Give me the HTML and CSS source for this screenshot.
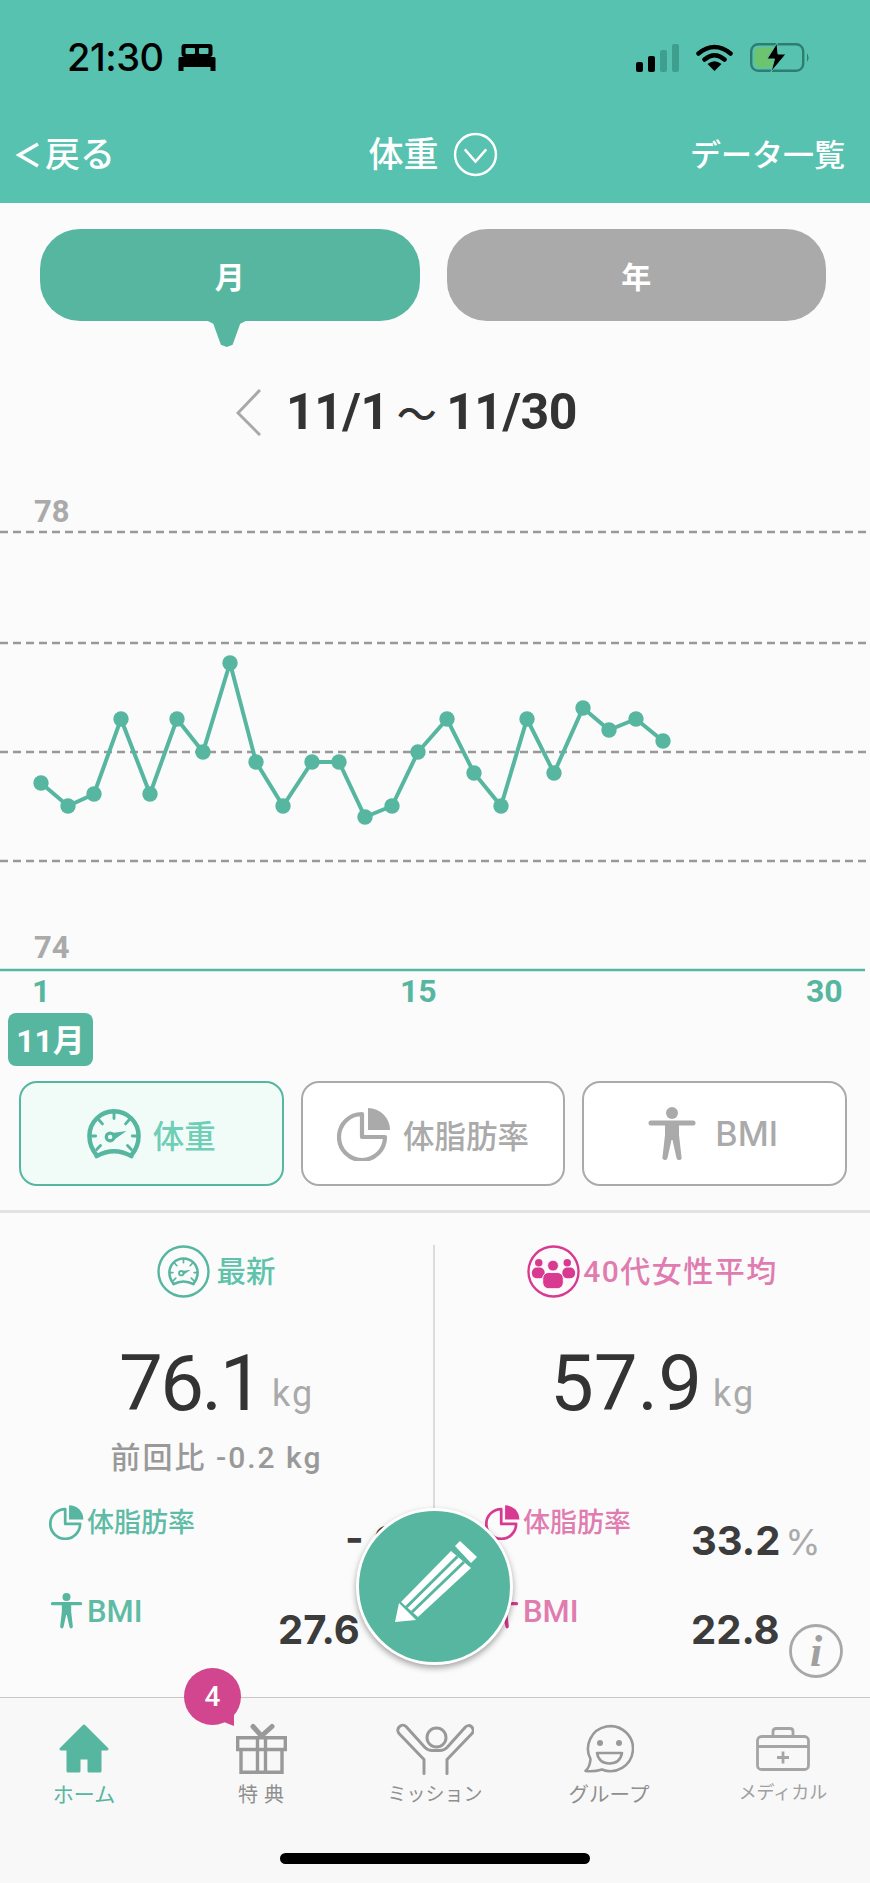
FILE: index.html
```html
<!DOCTYPE html>
<html lang="ja">
  <head>
    <meta charset="UTF-8" />
    <meta name="viewport" content="width=device-width, initial-scale=1.0" />
    <title>体重</title>
    <link rel="stylesheet" href="styles.css">
  </head>
  <body>
    <svg class="defs" width="0" height="0">
      <symbol id="i-gauge" viewBox="0 0 56 52">
        <g fill="none" stroke="currentColor" stroke-width="4.6" stroke-linecap="round">
          <path d="M10 48C5 42 2.5 35 2.5 28A25.5 25.5 0 0 1 53.500 28C53.500 35 51 42 46 48" />
          <path d="M10 49Q28 39 46 49" />
          <path d="M28 4V10M12 11L16 15.500M44 11L40 15.500M4 28H9M47 28H52M10 42L14 38M46 42L42 38" stroke-width="3" />
          <circle cx="24" cy="29" r="4" stroke-width="3.400" />
        </g>
        <path d="M26 25L41 23L28 32Z" fill="currentColor" />
      </symbol>
      <symbol id="i-pie" viewBox="0 0 54 54">
        <path d="M25 7A23 23 0 1 0 48 30H25Z" fill="none" stroke="currentColor" stroke-width="4.200" stroke-linejoin="round" />
        <path d="M31 1A22 22 0 0 1 53 23H31Z" fill="currentColor" />
      </symbol>
      <symbol id="i-person" viewBox="0 0 48 54">
        <circle cx="24" cy="6" r="6" fill="currentColor" />
        <path d="M3 16H45" stroke="currentColor" stroke-width="5" stroke-linecap="round" />
        <path d="M17 16H31V28L33.500 50A2.500 2.500 0 0 1 28.500 51L24.500 33H23.500L19.500 51A2.500 2.500 0 0 1 14.500 50L17 28Z" fill="currentColor" />
      </symbol>
    </svg>

    <div class="phone">
      <header class="top">
        <div class="status">
          <div class="status-left">
            <span class="clock">21:30</span>
            <svg class="bed" viewBox="0 0 37 27">
              <rect x="3" y="0" width="31" height="13" rx="3" fill="#000" />
              <rect x="7" y="4" width="9.500" height="6" rx="1" fill="#58c2b0" />
              <rect x="20.500" y="4" width="9.500" height="6" rx="1" fill="#58c2b0" />
              <rect x="0" y="13" width="37" height="10" rx="1.500" fill="#000" />
              <rect x="0" y="22" width="5" height="5" fill="#000" />
              <rect x="32" y="22" width="5" height="5" fill="#000" />
            </svg>
          </div>
          <div class="status-right">
            <svg class="signal" viewBox="0 0 44 28">
              <rect x="0" y="18" width="7" height="10" rx="2" fill="#000" />
              <rect x="12" y="12" width="7" height="16" rx="2" fill="#000" />
              <rect x="24" y="6" width="7" height="22" rx="2" fill="#3f9f8f" />
              <rect x="36" y="0" width="7" height="28" rx="2" fill="#3f9f8f" />
            </svg>
            <svg class="wifi" viewBox="0 0 36 27">
              <path d="M2 9.500Q18 -3.500 34 9.500M8 15.500Q18 7 28 15.500" fill="none" stroke="#000" stroke-width="4.500" stroke-linecap="round" />
              <path d="M11 20Q18 14.500 25 20L18 27Z" fill="#000" />
            </svg>
            <svg class="battery" viewBox="0 0 60 29">
              <rect x="1.200" y="1.200" width="52" height="26.600" rx="7" fill="none" stroke="#2f7d70" stroke-width="2.400" />
              <path d="M10 4.500H24V24.500H10A5 5 0 0 1 4.500 19.500V9.500A5 5 0 0 1 10 4.500Z" fill="#6cc46e" />
              <path d="M57 10Q60 14.500 57 19Z" fill="#2f7d70" />
              <path d="M27 0L17 16H24.500L21 29L36 11H28Z" fill="#000" stroke="#58c2b0" stroke-width="1" />
            </svg>
          </div>
        </div>
        <nav class="nav">
          <a class="nav-back">
            <svg class="nav-chevron" viewBox="0 0 26 28"><path d="M23 3L4 14L23 25" fill="none" stroke="#fff" stroke-width="3.500" /></svg>
            <span>戻る</span>
          </a>
          <div class="nav-title">
            <span>体重</span>
            <svg class="nav-down" viewBox="0 0 43 44">
              <circle cx="21.500" cy="22" r="20" fill="none" stroke="#fff" stroke-width="2.400" />
              <path d="M11 17L21.500 29L32 17" fill="none" stroke="#fff" stroke-width="2.400" />
            </svg>
          </div>
          <a class="nav-list">データ一覧</a>
        </nav>
      </header>

      <main class="content">
        <div class="segments">
          <div class="seg seg--on">月</div>
          <div class="seg">年</div>
        </div>

        <div class="range">
          <svg class="range-prev" viewBox="0 0 25 47"><path d="M24 1L2 24L24 46" fill="none" stroke="#a8a8a8" stroke-width="3" /></svg>
          <span>11/1<span class="range-tilde">〜</span>11/30</span>
        </div>

        <svg class="chart" viewBox="0 0 870 520" width="870" height="520">
          <g class="chart-grid">
            <line x1="0" y1="42" x2="866" y2="42" />
            <line x1="0" y1="153" x2="866" y2="153" />
            <line x1="0" y1="262" x2="866" y2="262" />
            <line x1="0" y1="371" x2="866" y2="371" />
          </g>
          <text class="chart-y" x="34" y="32">78</text>
          <text class="chart-y" x="34" y="468">74</text>
          <line class="chart-base" x1="0" y1="480" x2="865" y2="480" />
          <polyline class="chart-line" points="41,293 68,316 94,304 121,229 150,304 177,229 203,262 230,173 256,272 283,316 312,272 339,272 365,327 392,316 418,262 447,229 474,283 501,316 527,229 554,283 583,218 609,240 636,229 663,251" />
          <g class="chart-dots">
            <circle cx="41" cy="293" r="7.700" /><circle cx="68" cy="316" r="7.700" /><circle cx="94" cy="304" r="7.700" />
            <circle cx="121" cy="229" r="7.700" /><circle cx="150" cy="304" r="7.700" /><circle cx="177" cy="229" r="7.700" />
            <circle cx="203" cy="262" r="7.700" /><circle cx="230" cy="173" r="7.700" /><circle cx="256" cy="272" r="7.700" />
            <circle cx="283" cy="316" r="7.700" /><circle cx="312" cy="272" r="7.700" /><circle cx="339" cy="272" r="7.700" />
            <circle cx="365" cy="327" r="7.700" /><circle cx="392" cy="316" r="7.700" /><circle cx="418" cy="262" r="7.700" />
            <circle cx="447" cy="229" r="7.700" /><circle cx="474" cy="283" r="7.700" /><circle cx="501" cy="316" r="7.700" />
            <circle cx="527" cy="229" r="7.700" /><circle cx="554" cy="283" r="7.700" /><circle cx="583" cy="218" r="7.700" />
            <circle cx="609" cy="240" r="7.700" /><circle cx="636" cy="229" r="7.700" /><circle cx="663" cy="251" r="7.700" />
          </g>
          <text class="chart-x" x="32" y="512">1</text>
          <text class="chart-x" x="400" y="512">15</text>
          <text class="chart-x" x="806" y="512">30</text>
        </svg>

        <div class="month-tag">11月</div>

        <div class="metrics">
          <div class="metric metric--on">
            <svg class="metric-icon"><use href="#i-gauge" /></svg>
            <span>体重</span>
          </div>
          <div class="metric">
            <svg class="metric-icon"><use href="#i-pie" /></svg>
            <span>体脂肪率</span>
          </div>
          <div class="metric">
            <svg class="metric-icon"><use href="#i-person" /></svg>
            <span class="metric-latin">BMI</span>
          </div>
        </div>

        <div class="rule"></div>

        <section class="stats">
          <div class="stat-col stat-col--mine">
            <div class="stat-head">
              <span class="head-badge">
                <svg viewBox="0 0 53 53">
                  <circle cx="26.500" cy="26.500" r="25" fill="none" stroke="currentColor" stroke-width="2.400" />
                  <use href="#i-gauge" x="11" y="12" width="31" height="29" />
                </svg>
              </span>
              <span class="head-text">最新</span>
            </div>
            <div class="stat-main"><b>76.1</b><small>kg</small></div>
            <div class="stat-delta">前回比 -0.2 kg</div>
            <div class="stat-row">
              <div class="stat-label"><svg><use href="#i-pie" /></svg>体脂肪率</div>
              <div class="stat-num stat-num--diff">- 0.3<small>%</small></div>
            </div>
            <div class="stat-row">
              <div class="stat-label"><svg><use href="#i-person" /></svg><span class="stat-latin">BMI</span></div>
              <div class="stat-num">27.6</div>
            </div>
          </div>

          <div class="stats-rule"></div>

          <div class="stat-col stat-col--avg">
            <div class="stat-head">
              <span class="head-badge">
                <svg viewBox="0 0 54 54">
                  <circle cx="27" cy="27" r="25.500" fill="none" stroke="currentColor" stroke-width="2.400" />
                  <circle cx="12" cy="18" r="3.800" fill="currentColor" />
                  <circle cx="41" cy="18" r="3.800" fill="currentColor" />
                  <rect x="5" y="23" width="13" height="11" rx="5" fill="currentColor" />
                  <rect x="36" y="23" width="13" height="11" rx="5" fill="currentColor" />
                  <circle cx="26.500" cy="21" r="5.500" fill="currentColor" stroke="#fbfbfb" stroke-width="0.800" />
                  <rect x="16" y="28" width="21" height="16.500" rx="6" fill="currentColor" stroke="#fbfbfb" stroke-width="1" />
                </svg>
              </span>
              <span class="head-text">40代女性平均</span>
            </div>
            <div class="stat-main"><b>57.9</b><small>kg</small></div>
            <div class="stat-delta"></div>
            <div class="stat-row">
              <div class="stat-label"><svg><use href="#i-pie" /></svg>体脂肪率</div>
              <div class="stat-num">33.2<small>%</small></div>
            </div>
            <div class="stat-row">
              <div class="stat-label"><svg><use href="#i-person" /></svg><span class="stat-latin">BMI</span></div>
              <div class="stat-num">22.8</div>
            </div>
          </div>
        </section>
      </main>

      <svg class="info" viewBox="0 0 54 54">
        <circle cx="27" cy="27" r="25.500" fill="#fbfbfb" stroke="#a8a8a8" stroke-width="2.800" />
        <text x="27" y="42" text-anchor="middle">i</text>
      </svg>

      <button class="fab" type="button">
        <svg viewBox="0 0 151 151">
          <path d="M96 35L101 30L118 46L112 52Z" fill="#fff" />
          <path d="M92 40L112 57L59 106L42 91Z" fill="#fff" />
          <path d="M98.500 45.500L47.500 96M105 51L53 101" stroke="#56b6a0" stroke-width="3" fill="none" />
          <path d="M40 92L57 109L36 111Z" fill="#fff" />
        </svg>
      </button>

      <footer class="tabbar">
        <div class="tabs">
          <a class="tab tab--on">
            <svg class="tab-icon" width="50" height="50" viewBox="0 0 50 50">
              <path d="M25 2L48 25H41V47H30V34H20V47H9V25H2Z" fill="#56b6a0" stroke="#56b6a0" stroke-width="3" stroke-linejoin="round" />
            </svg>
            <span>ホーム</span>
          </a>
          <a class="tab">
            <span class="badge">4</span>
            <svg class="tab-icon" width="51" height="50" viewBox="0 0 51 50">
              <g fill="none" stroke="#999" stroke-width="3.400">
                <path d="M1.700 13.700H49.300V25.500H1.700ZM5 25.500V48.300H46V25.500M21.500 13.700V48.300M29.500 13.700V48.300" />
                <path d="M25.500 12L17 2.500M25.500 12L36 2.500" stroke-width="5" stroke-linecap="round" />
              </g>
            </svg>
            <span class="tab-spaced">特典</span>
          </a>
          <a class="tab">
            <svg class="tab-icon" width="78" height="51" viewBox="0 0 78 51">
              <g fill="none" stroke="#999" stroke-width="3" stroke-linecap="round" stroke-linejoin="round">
                <circle cx="40.500" cy="14" r="9.500" />
                <path d="M28 50V36L3 10C-1 5 6 -1 10 3L29 24Q32 27 36 27H44Q48 27 51 24L69 4C73 -1 80 5 76 10L51 36V50" />
              </g>
            </svg>
            <span class="tab-small">ミッション</span>
          </a>
          <a class="tab">
            <svg class="tab-icon" width="50" height="50" viewBox="0 0 50 50">
              <path d="M6.500 35A22.500 22.500 0 1 1 18 45.500Q10 48 1.500 47Q6 43 6.500 35Z" fill="none" stroke="#999" stroke-width="2.600" stroke-linejoin="round" />
              <circle cx="16" cy="19" r="3" fill="#999" />
              <circle cx="35" cy="19" r="3" fill="#999" />
              <path d="M13 29H38Q36 39.500 25.500 39.500Q15 39.500 13 29Z" fill="none" stroke="#999" stroke-width="2.600" stroke-linejoin="round" />
            </svg>
            <span class="tab-group">グループ</span>
          </a>
          <a class="tab tab--med">
            <svg class="tab-icon" width="54" height="45" viewBox="0 0 54 45">
              <g fill="none" stroke="#a5a5a5" stroke-width="2.800">
                <path d="M17 9V5Q17 2 20 2H34Q37 2 37 5V9" />
                <rect x="1.500" y="10" width="51" height="33" rx="4" />
                <path d="M1.500 20H52.500M27 25V37M21 31H33" />
              </g>
            </svg>
            <span class="tab-tiny">メディカル</span>
          </a>
        </div>
        <div class="home-bar"></div>
      </footer>
    </div>
  </body>
</html>
```

FILE: styles.css
```css
* {
  box-sizing: border-box;
}

body {
  margin: 0;
  font-family: Roboto, "Noto Sans CJK JP", sans-serif;
  background: #fbfbfb;
}

.defs {
  position: absolute;
}

.phone {
  position: relative;
  width: 870px;
  height: 1883px;
  display: flex;
  flex-direction: column;
  overflow: hidden;
  background: #fbfbfb;
}

/* header */
.top {
  height: 203px;
  background: #58c2b0;
  color: #fff;
}

.status {
  height: 112px;
  padding: 43px 59px 0 67px;
  display: flex;
  justify-content: space-between;
  align-items: flex-start;
}

.status-left,
.status-right {
  display: flex;
  align-items: center;
}

.clock {
  font-family: Inter, sans-serif;
  font-size: 38px;
  font-weight: 500;
  line-height: 29px;
  letter-spacing: -0.5px;
  color: #000;
}

.bed {
  width: 38px;
  height: 27px;
  margin-left: 14px;
}

.signal {
  width: 44px;
  height: 28px;
}

.wifi {
  width: 37px;
  height: 27px;
  margin-left: 16px;
}

.battery {
  width: 62px;
  height: 29px;
  margin-left: 16px;
}

.nav {
  display: grid;
  grid-template-columns: 1fr auto 1fr;
  align-items: center;
  padding: 22px 25px 0 15px;
}

.nav-back {
  display: flex;
  align-items: center;
  gap: 4px;
  font-size: 35px;
  font-weight: 500;
  line-height: 44px;
}

.nav-chevron {
  width: 26px;
  height: 28px;
  margin-top: -3px;
}

.nav-title {
  display: flex;
  align-items: center;
  gap: 14px;
  margin-left: 6px;
  font-size: 35px;
  font-weight: 500;
  line-height: 44px;
}

.nav-down {
  width: 45px;
  height: 45px;
  margin-top: -3px;
}

.nav-list {
  justify-self: end;
  font-size: 31px;
  font-weight: 500;
  line-height: 44px;
}

/* month / year */
.content {
  flex: 1;
  min-height: 0;
  overflow: hidden;
}

.segments {
  display: flex;
  gap: 27px;
  padding: 26px 44px 0 40px;
}

.seg {
  position: relative;
  flex: 1;
  height: 92px;
  border-radius: 40px;
  background: #aaa;
  color: #fff;
  font-size: 30px;
  font-weight: 700;
  display: flex;
  align-items: center;
  justify-content: center;
}

.seg--on {
  background: #56b6a0;
}

.seg--on::after {
  content: "";
  position: absolute;
  left: 50%;
  top: 91px;
  width: 42px;
  height: 27px;
  margin-left: -24px;
  background: #56b6a0;
  clip-path: polygon(0 0, 100% 0, 82% 14%, 64% 92%, 50% 100%, 36% 92%, 18% 14%);
}

.range {
  height: 51px;
  margin-top: 68px;
  padding-left: 236px;
  display: flex;
  align-items: flex-start;
  gap: 25px;
  font-size: 50px;
  font-weight: 700;
  line-height: 47px;
  letter-spacing: -0.5px;
  color: #333;
}

.range-prev {
  width: 25px;
  height: 47px;
}

.range-tilde {
  margin: 0 10px 0 8px;
  font-size: 40px;
  font-weight: 500;
}

/* chart */
.chart {
  display: block;
  margin-top: 50px;
}

.chart-grid line {
  stroke: #999;
  stroke-width: 2.400;
  stroke-dasharray: 8 5;
}

.chart-base {
  stroke: #56b6a0;
  stroke-width: 2.500;
}

.chart-line {
  fill: none;
  stroke: #56b6a0;
  stroke-width: 4;
}

.chart-dots circle {
  fill: #56b6a0;
}

.chart-y {
  font-size: 31px;
  font-weight: 700;
  fill: #aaa;
}

.chart-x {
  font-size: 32px;
  font-weight: 700;
  fill: #56b6a0;
}

.month-tag {
  width: 85px;
  height: 53px;
  margin: 3px 0 0 8px;
  border-radius: 8px;
  background: #56b6a0;
  color: #fff;
  font-size: 32px;
  font-weight: 700;
  line-height: 56px;
  text-align: center;
}

/* metric buttons */
.metrics {
  display: grid;
  grid-template-columns: repeat(3, 1fr);
  gap: 17px;
  margin-top: 15px;
  padding: 0 23px 0 19px;
}

.metric {
  height: 105px;
  border: 2px solid #aaa;
  border-radius: 18px;
  background: #fff;
  color: #aaa;
  font-size: 31.500px;
  font-weight: 500;
  display: flex;
  align-items: center;
  justify-content: center;
  gap: 12px;
}

.metric--on {
  border-color: #56b6a0;
  background: #f1fcf9;
  color: #6fceb5;
}

.metric--on .metric-icon {
  color: #56b6a0;
}

.metric-icon {
  width: 54px;
  height: 54px;
}

.metric-latin {
  font-family: Inter, sans-serif;
  font-size: 34px;
  margin: 0 6px 0 4px;
}

.rule {
  height: 3px;
  margin-top: 24px;
  background: #e2e2e2;
}

/* stats */
.stats {
  display: grid;
  grid-template-columns: 433px 2px 1fr;
  padding-top: 32px;
}

.stats-rule {
  height: 300px;
  background: #dcdcdc;
}

.stat-col--mine {
  color: #56b6a0;
}

.stat-col--avg {
  color: #d93a91;
}

.stat-head {
  display: flex;
  justify-content: center;
  align-items: center;
  height: 53px;
  gap: 6px;
  font-size: 29.500px;
  font-weight: 500;
  color: #5fc2aa;
}

.head-text {
  padding-bottom: 6px;
}

.stat-col--avg .stat-head {
  color: #e07cb0;
  gap: 3px;
  font-size: 30px;
  letter-spacing: 1.500px;
}

.head-badge {
  display: flex;
  color: #56b6a0;
}

.stat-col--avg .head-badge {
  color: #d93a91;
}

.head-badge svg {
  width: 53px;
  height: 53px;
}

.stat-main {
  height: 119px;
  padding-top: 56px;
  text-align: center;
  line-height: 60px;
  color: #333;
}

.stat-main b {
  font-size: 78px;
  font-weight: 400;
  letter-spacing: -2.500px;
}

.stat-col--avg .stat-main b {
  letter-spacing: 0;
}

.stat-main small {
  margin-left: 11px;
  font-size: 36px;
  letter-spacing: 2px;
  vertical-align: 4px;
  color: #aaa;
}

.stat-delta {
  height: 87px;
  padding-top: 21px;
  text-align: center;
  font-size: 30px;
  font-weight: 500;
  line-height: 40px;
  letter-spacing: 2px;
  color: #999;
}

.stat-row {
  display: grid;
  grid-template-columns: 229px 1fr;
  height: 89px;
  padding-left: 49px;
}

.stat-col--avg .stat-row {
  grid-template-columns: 206px 1fr;
  padding-left: 50px;
}

.stat-label {
  display: flex;
  align-items: flex-start;
  height: 38px;
  gap: 3px;
  font-size: 27px;
  font-weight: 500;
  line-height: 38px;
  white-space: nowrap;
  color: #5fbba5;
}

.stat-latin {
  font-size: 31px;
}

.stat-col--avg .stat-label {
  color: #e07cb0;
}

.stat-label svg {
  flex: none;
  width: 35px;
  height: 36px;
  color: #56b6a0;
}

.stat-col--avg .stat-label svg {
  color: #d93a91;
}

.stat-num {
  padding-top: 17px;
  font-family: Inter, sans-serif;
  font-size: 40px;
  font-weight: 700;
  line-height: 40px;
  white-space: nowrap;
  color: #3c3c3c;
}

.stat-num--diff {
  margin-left: 67px;
}

.stat-num small {
  margin-left: 5px;
  font-size: 36px;
  font-weight: 400;
  color: #aaa;
}

/* things on top of the page */
.info {
  position: absolute;
  left: 789px;
  top: 1624px;
  width: 54px;
  height: 54px;
}

.info text {
  font-family: "Liberation Serif", serif;
  font-size: 44px;
  font-style: italic;
  font-weight: 700;
  fill: #a0a0a0;
}

.fab {
  position: absolute;
  left: 356px;
  top: 1508px;
  width: 157px;
  height: 157px;
  padding: 0;
  border: 3px solid #fff;
  border-radius: 50%;
  background: #56b6a0;
  box-shadow: 0 3px 6px rgba(0, 0, 0, 0.35);
}

.fab svg {
  display: block;
  width: 151px;
  height: 151px;
}

/* tab bar */
.tabbar {
  height: 186px;
  border-top: 1px solid #c8c8c8;
  background: #f8f8f8;
  display: flex;
  flex-direction: column;
  align-items: center;
}

.tabs {
  display: grid;
  grid-template-columns: repeat(5, 1fr);
  width: 100%;
  padding-top: 25px;
}

.tab {
  position: relative;
  display: flex;
  flex-direction: column;
  align-items: center;
  font-size: 20px;
  line-height: 24px;
  color: #8f8f8f;
}

.tab-icon {
  height: 52px;
  margin-bottom: 8px;
}

.tab--on {
  margin: 0 3px 0 -3px;
  font-size: 21px;
  color: #56b6a0;
}

.tab-spaced {
  letter-spacing: 6px;
  margin-right: -6px;
}

.tab-small {
  font-size: 19px;
}

.tab-group {
  font-size: 20.500px;
}

.tab-tiny {
  font-size: 18px;
  margin-top: -2px;
  color: #a0a0a0;
}

.badge {
  position: absolute;
  left: 10px;
  top: -55px;
  width: 57px;
  height: 57px;
  border-radius: 50%;
  background: #d2468f;
  color: #fff;
  font-size: 28px;
  font-weight: 500;
  line-height: 57px;
  text-align: center;
}

.badge::after {
  content: "";
  position: absolute;
  left: 36px;
  top: 44px;
  width: 14px;
  height: 14px;
  background: #d2468f;
  clip-path: polygon(0 60%, 100% 0, 100% 100%);
}

.home-bar {
  width: 310px;
  height: 11px;
  margin-top: 46px;
  border-radius: 6px;
  background: #000;
}
```
